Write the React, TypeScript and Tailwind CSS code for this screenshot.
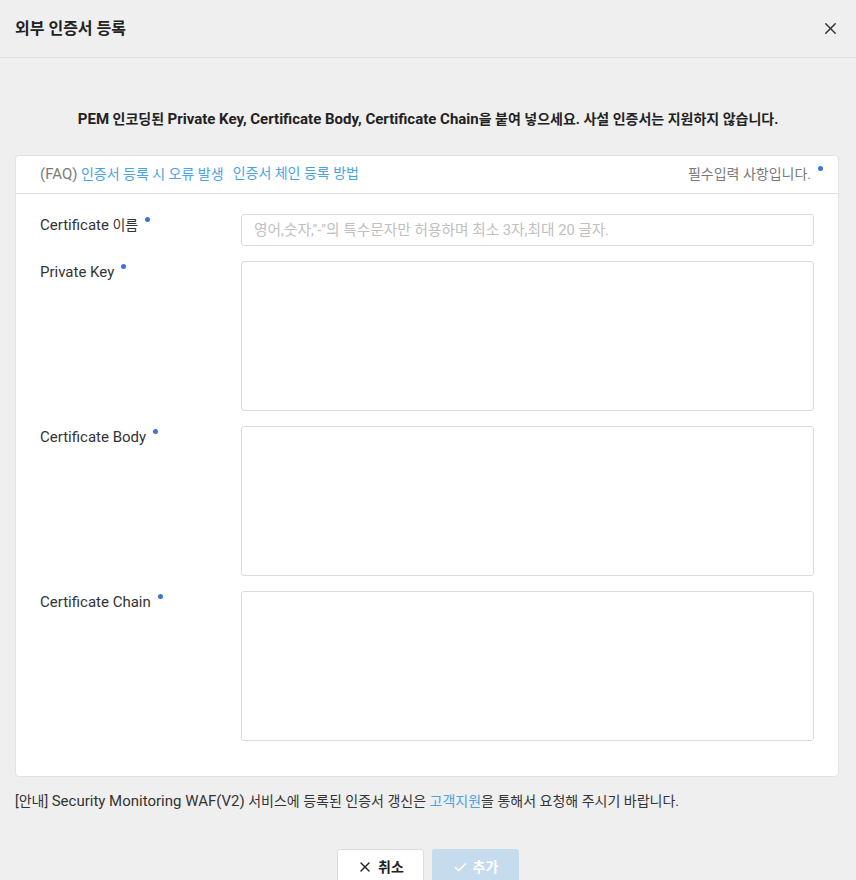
import { X, Check } from 'lucide-react';
import type { ReactNode } from 'react';

const font = { fontFamily: 'Roboto, "Noto Sans CJK KR", sans-serif' };

// latin runs are set a touch larger than the hangul around them
function L({ children }: { children: ReactNode }) {
  return <span className="text-[15px]">{children}</span>;
}

function Dot() {
  return <span className="ml-[7px] inline-block h-[5px] w-[5px] -translate-y-[7px] rounded-full bg-[#3b74d6] align-middle" />;
}

function Row({ label, tall, placeholder }: { label: ReactNode; tall?: boolean; placeholder?: string }) {
  return (
    <div className="flex">
      <div className="w-[201px] shrink-0 pt-[1px] text-[14px] leading-5 text-[#333]">
        {label}
        <Dot />
      </div>
      {tall ? (
        <textarea className="h-[150px] flex-1 resize-none rounded-[3px] border border-[#dcdcdc] bg-white" />
      ) : (
        <input
          placeholder={placeholder}
          className="h-[32px] flex-1 rounded-[3px] border border-[#dcdcdc] bg-white px-[12px] text-[14.7px] text-[#333] placeholder:text-[#c0c0c0]"
        />
      )}
    </div>
  );
}

export default function App() {
  return (
    <div className="h-[880px] w-[856px] overflow-hidden bg-[#efefef]" style={font}>
      {/* header */}
      <div className="flex h-[58px] items-center justify-between border-b border-[#dedede] pl-[15px] pr-[16px]">
        <h1 className="text-[16px] font-bold text-[#222]">외부 인증서 등록</h1>
        <X size={19} strokeWidth={1.8} className="text-[#333]" />
      </div>

      <p className="mt-[51px] text-center text-[14px] font-bold leading-5 text-[#222]">
        <L>PEM</L> 인코딩된 <L>Private Key, Certificate Body, Certificate Chain</L>을 붙여 넣으세요. 사설 인증서는 지원하지 않습니다.
      </p>

      {/* card */}
      <div className="ml-[15px] mr-[17px] mt-[26px] rounded-[4px] border border-[#e3e3e3] bg-white">
        <div className="flex h-[38px] items-center justify-between border-b border-[#e3e3e3] pl-[24px] pr-[15px] text-[14px]">
          <div className="flex gap-[9px]">
            <span>
              <span className="text-[#7a7a7a]">
                <L>(FAQ)</L>{' '}
              </span>
              <span className="text-[#4aa3e2]">인증서 등록 시 오류 발생</span>
            </span>
            <span className="text-[#4aa3e2]">인증서 체인 등록 방법</span>
          </div>
          <span className="text-[#7a7a7a]">
            필수입력 사항입니다.
            <Dot />
          </span>
        </div>
        <div className="flex flex-col gap-[15px] pb-[35px] pl-[24px] pr-[24px] pt-[20px]">
          <Row
            label={
              <>
                <L>Certificate</L> 이름
              </>
            }
            placeholder={'영어,숫자,"-"의 특수문자만 허용하며 최소 3자,최대 20 글자.'}
          />
          <Row label={<L>Private Key</L>} tall />
          <Row label={<L>Certificate Body</L>} tall />
          <Row label={<L>Certificate Chain</L>} tall />
        </div>
      </div>

      <p className="ml-[15px] mt-[14px] text-[14px] leading-5 text-[#333]">
        [안내] <L>Security Monitoring WAF(V2)</L> 서비스에 등록된 인증서 갱신은 <span className="text-[#4aa3e2]">고객지원</span>을 통해서 요청해 주시기 바랍니다.
      </p>

      <div className="mt-[38px] flex justify-center gap-[8px]">
        <button className="flex h-[36px] w-[87px] items-center justify-center gap-[5px] rounded-[3px] border border-[#dddddd] bg-white text-[14px] font-bold text-[#222]">
          <X size={16} strokeWidth={2} />
          취소
        </button>
        <button className="flex h-[36px] w-[87px] items-center justify-center gap-[5px] rounded-[3px] bg-[#c6dbed] text-[14px] font-bold text-white">
          <Check size={15} strokeWidth={2.5} />
          추가
        </button>
      </div>
    </div>
  );
}
